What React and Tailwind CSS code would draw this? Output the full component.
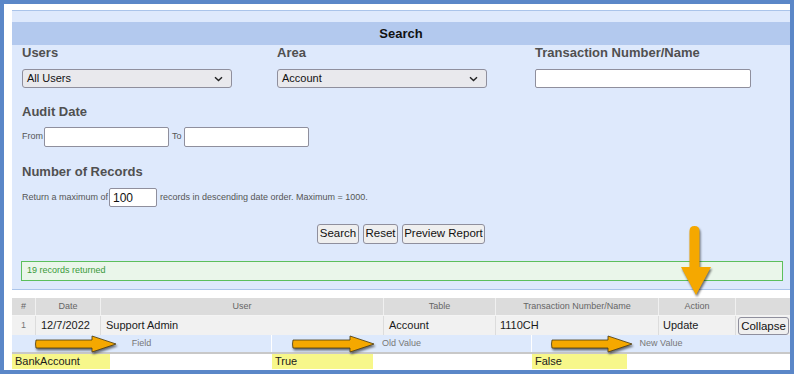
import React from 'react';

const cols = [
    { label: '#', w: 'w-[24px]' },
    { label: 'Date', w: 'w-[65px]' },
    { label: 'User', w: 'w-[283px]' },
    { label: 'Table', w: 'w-[112px]' },
    { label: 'Transaction Number/Name', w: 'w-[163px]' },
    { label: 'Action', w: 'w-[77px]' },
    { label: '', w: 'flex-1' },
];

function Chevron() {
    return (
        <svg width="9" height="6" viewBox="0 0 9 6" className="shrink-0">
            <path d="M1 1.2 L4.5 4.6 L8 1.2" fill="none" stroke="#222" strokeWidth="1.4" />
        </svg>
    );
}

function Select({ value, w }) {
    return (
        <div className={`${w} h-[19px] flex items-center justify-between pl-[4px] pr-[8px] bg-[#e9e9ed] border border-[#8f8f9d] rounded-[3px] text-[11px] text-[#111]`}>
            <span>{value}</span>
            <Chevron />
        </div>
    );
}

function RightArrow({ className, len }) {
    return (
        <svg
            width={len + 2}
            height="20"
            viewBox={`0 0 ${len + 2} 20`}
            className={`absolute drop-shadow-[1px_2px_1px_rgba(0,0,0,0.55)] ${className}`}
        >
            <path
                d={`M2 6 L${len - 24} 6 L${len - 24} 2 L${len} 10 L${len - 24} 18 L${len - 24} 14 L2 14 Q1 10 2 6 Z`}
                fill="#f5a800"
                stroke="#4a3a10"
                strokeWidth="0.8"
                strokeLinejoin="round"
            />
        </svg>
    );
}

export default function App() {
    return (
        <div className="relative w-[794px] h-[374px] overflow-hidden border-4 border-[#5b87c8] bg-white font-['Liberation_Sans',Arial,sans-serif]">
            <div className="pl-2 pt-[6px]">
                {/* Search panel */}
                <div className="border-y border-[#aac4ea] bg-[#dee9fc] pb-2">
                    <div className="h-[11px]" />
                    <div className="h-[23px] bg-[#b3c9ee] flex items-center justify-center text-[13px] font-bold text-[#111]">
                        Search
                    </div>

                    <div className="pl-[10px]">
                        <div className="grid grid-cols-[255px_258px_1fr]">
                            <div>
                                <div className="h-4 leading-4 text-[13px] font-bold text-[#505050]">Users</div>
                                <div className="mt-2"><Select value="All Users" w="w-[210px]" /></div>
                            </div>
                            <div>
                                <div className="h-4 leading-4 text-[13px] font-bold text-[#505050]">Area</div>
                                <div className="mt-2"><Select value="Account" w="w-[210px]" /></div>
                            </div>
                            <div>
                                <div className="h-4 leading-4 text-[13px] font-bold text-[#505050]">Transaction Number/Name</div>
                                <div className="mt-2 w-[216px] h-[19px] bg-white border border-[#8f8f9d] rounded-[2px]" />
                            </div>
                        </div>

                        <div className="mt-4 h-4 leading-4 text-[13px] font-bold text-[#505050]">Audit Date</div>
                        <div className="mt-[7px] h-5 flex items-center text-[9px] text-[#555]">
                            <span className="w-[22px]">From</span>
                            <div className="w-[125px] h-5 bg-white border border-[#8f8f9d] rounded-[2px]" />
                            <span className="ml-[3px] w-[12px]">To</span>
                            <div className="w-[125px] h-5 bg-white border border-[#8f8f9d] rounded-[2px]" />
                        </div>

                        <div className="mt-[17px] h-4 leading-4 text-[13px] font-bold text-[#505050]">Number of Records</div>
                        <div className="mt-2 h-[19px] flex items-center text-[9px] text-[#555]">
                            <span className="w-[87px]">Return a maximum of</span>
                            <div className="w-[48px] h-[19px] bg-white border border-[#8f8f9d] rounded-[2px] flex items-center pl-[3px] text-[12px] text-[#111]">
                                100
                            </div>
                            <span className="ml-[3px]">records in descending date order. Maximum = 1000.</span>
                        </div>
                    </div>

                    <div className="mt-[17px] flex justify-center gap-[4px]">
                        <button className="h-5 w-[42px] bg-[#efefef] border border-[#8f8f9d] rounded-[3px] text-[11.5px] text-[#111]">Search</button>
                        <button className="h-5 w-[35px] bg-[#efefef] border border-[#8f8f9d] rounded-[3px] text-[11.5px] text-[#111]">Reset</button>
                        <button className="h-5 w-[83px] bg-[#efefef] border border-[#8f8f9d] rounded-[3px] text-[11.5px] text-[#111]">Preview Report</button>
                    </div>

                    <div className="mt-[17px] ml-[9px] mr-[7px] h-5 flex items-center pl-[5px] bg-[#eaf6ea] border border-[#5cbf5c] text-[9px] text-[#3a9a3a]">
                        19 records returned
                    </div>
                </div>

                {/* Results table */}
                <div className="mt-2">
                    <div className="flex h-[18px] bg-[#dcdcdc] border-b border-[#f4f4f4]">
                        {cols.map((c, i) => (
                            <div key={i} className={`${c.w} flex items-center justify-center text-[9px] text-[#666] border-r border-[#f0f0f0] last:border-r-0`}>
                                {c.label}
                            </div>
                        ))}
                    </div>
                    <div className="flex h-[19px] bg-[#f1f1f1] text-[11px] text-[#1a1a1a]">
                        <div className="w-[24px] flex items-center justify-center text-[9px] text-[#777] border-r border-[#dcdcdc]">1</div>
                        <div className="w-[65px] flex items-center pl-[5px] border-r border-[#dcdcdc]">12/7/2022</div>
                        <div className="w-[283px] flex items-center pl-[5px] border-r border-[#dcdcdc]">Support Admin</div>
                        <div className="w-[112px] flex items-center pl-[5px] border-r border-[#dcdcdc]">Account</div>
                        <div className="w-[163px] flex items-center pl-[4px] border-r border-[#dcdcdc]">1110CH</div>
                        <div className="w-[77px] flex items-center pl-[4px] border-r border-[#dcdcdc]">Update</div>
                        <div className="flex-1 flex items-center pl-[2px]">
                            <button className="h-[18px] w-[51px] bg-[#efefef] border border-[#8f8f9d] rounded-[3px] text-[11.5px] text-[#111]">Collapse</button>
                        </div>
                    </div>
                    <div className="flex h-[19px] bg-[#dde9fc] text-[9px] text-[#777] border-b-2 border-[#c8c8c8]">
                        <div className="w-[260px] flex items-center justify-center border-r border-white">Field</div>
                        <div className="w-[260px] flex items-center justify-center border-r border-white">Old Value</div>
                        <div className="flex-1 flex items-center justify-center">New Value</div>
                    </div>
                    <div className="flex h-[15px] text-[11px] text-[#1a1a1a]">
                        <div className="w-[260px]">
                            <div className="w-[98px] h-full bg-[#f7f78a] pl-[3px] leading-[15px]">BankAccount</div>
                        </div>
                        <div className="w-[260px]">
                            <div className="w-[101px] h-full bg-[#f7f78a] pl-[3px] leading-[15px]">True</div>
                        </div>
                        <div className="flex-1">
                            <div className="w-[95px] h-full bg-[#f7f78a] pl-[3px] leading-[15px]">False</div>
                        </div>
                    </div>
                </div>
            </div>

            {/* Annotation arrows */}
            <svg width="36" height="78" viewBox="0 0 36 78" className="absolute left-[674px] top-[218px] drop-shadow-[1px_2px_1px_rgba(0,0,0,0.55)]">
                <path
                    d="M11.5 9 Q11.5 4 16.5 4 Q21.5 4 21.5 9 L21.5 45 L33 45 L18 73 L3 45 L11.5 45 Z"
                    fill="#f5a800"
                />
            </svg>
            <RightArrow className="left-[30px] top-[330px]" len={82} />
            <RightArrow className="left-[287px] top-[330px]" len={83} />
            <RightArrow className="left-[546px] top-[330px]" len={82} />
        </div>
    );
}
